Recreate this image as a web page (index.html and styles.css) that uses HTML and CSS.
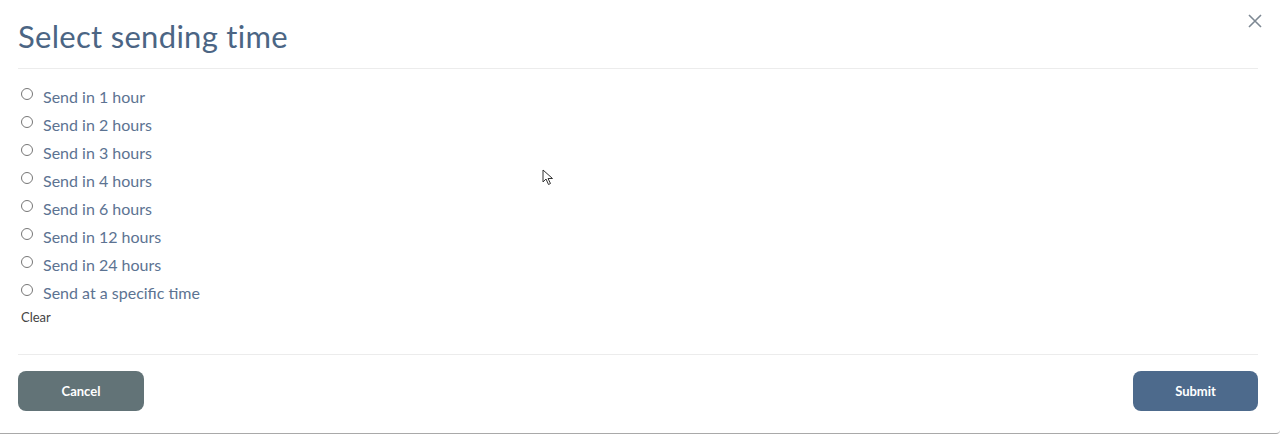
FILE: index.html
```html
<!DOCTYPE html>
<html lang="en">
<head>
    <meta charset="UTF-8">
    <meta name="viewport" content="width=device-width, initial-scale=1.0">
    <title>Select sending time</title>
    <link rel="stylesheet" href="styles.css">
</head>
<body>
    <div class="modal">
        <div class="modal-header">
            <h1>Select sending time</h1>
            <button class="close-btn" aria-label="Close">
                <svg width="14" height="14" viewBox="0 0 14 14"><path d="M1 1L13 13M13 1L1 13" stroke="#7d8893" stroke-width="1.6" fill="none"/></svg>
            </button>
        </div>

        <div class="modal-body">
            <label class="option"><input type="radio" name="when"> <span>Send in 1 hour</span></label>
            <label class="option"><input type="radio" name="when"> <span>Send in 2 hours</span></label>
            <label class="option"><input type="radio" name="when"> <span>Send in 3 hours</span></label>
            <label class="option"><input type="radio" name="when"> <span>Send in 4 hours</span></label>
            <label class="option"><input type="radio" name="when"> <span>Send in 6 hours</span></label>
            <label class="option"><input type="radio" name="when"> <span>Send in 12 hours</span></label>
            <label class="option"><input type="radio" name="when"> <span>Send in 24 hours</span></label>
            <label class="option"><input type="radio" name="when"> <span>Send at a specific time</span></label>
            <a class="clear-link">Clear</a>
        </div>

        <div class="modal-footer">
            <button class="btn btn-cancel">Cancel</button>
            <button class="btn btn-submit">Submit</button>
        </div>

        <svg class="cursor" width="12" height="17" viewBox="0 0 12 17"><path d="M1 1L1 13L4 10L6.5 15.5L8.5 14.5L6 9.5L10.5 9.5Z" fill="#fff" stroke="#333" stroke-width="1"/></svg>
    </div>
</body>
</html>
```

FILE: styles.css
```css
body {
    margin: 0;
    font-family: "Lato", "Open Sans", sans-serif;
    background: #fff;
}
.modal {
    position: relative;
    height: 434px;
    box-sizing: border-box;
    border-bottom: 1px solid #a9a9a9;
    border-bottom-right-radius: 4px;
    padding: 0 22px 0 18px;
}
.modal-header {
    display: flex;
    justify-content: space-between;
    align-items: flex-start;
    border-bottom: 1px solid #ececec;
    height: 68px;
}
h1 {
    margin: 0;
    padding-top: 17px;
    font-size: 31px;
    font-weight: 400;
    color: #4b6584;
    letter-spacing: 0.3px;
}
.close-btn {
    background: none;
    border: none;
    padding: 0;
    margin: 14px -4px 0 0;
    cursor: pointer;
}
.modal-body {
    padding: 18px 0 0 3px;
    height: 286px;
    box-sizing: border-box;
    border-bottom: 1px solid #ececec;
}
.option {
    display: flex;
    align-items: flex-start;
    height: 28px;
    color: #5c7392;
    font-size: 16px;
    cursor: pointer;
}
.option input {
    margin: 1px 10px 0 0;
    width: 12px;
    height: 12px;
}
.clear-link {
    display: block;
    margin-top: -2px;
    font-size: 13px;
    color: #444;
    cursor: pointer;
}
.modal-footer {
    display: flex;
    justify-content: space-between;
    padding: 16px 1px 0 0;
}
.btn {
    width: 126px;
    height: 40px;
    border: none;
    border-radius: 8px;
    color: #fff;
    font-family: "Lato", sans-serif;
    font-size: 13px;
    font-weight: 700;
    cursor: pointer;
}
.btn-cancel {
    background: #627377;
}
.btn-submit {
    margin-right: -1px;
    width: 125px;
    background: #4d6a8c;
}
.cursor {
    position: absolute;
    left: 542px;
    top: 169px;
}
```
